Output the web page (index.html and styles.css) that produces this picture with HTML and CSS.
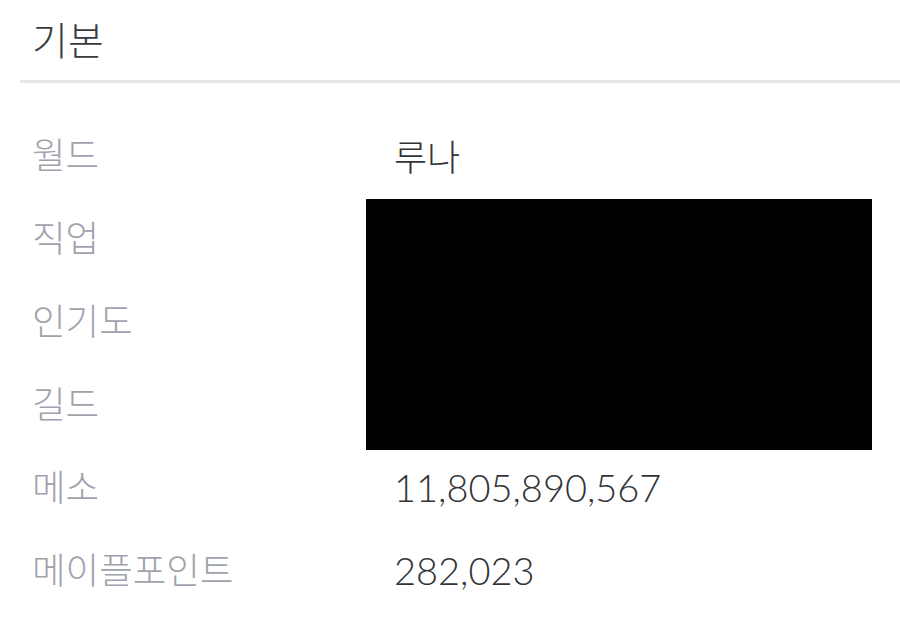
FILE: index.html
```html
<!DOCTYPE html>
<html lang="ko">
<head>
<meta charset="utf-8">
<link rel="stylesheet" href="styles.css">
</head>
<body>
<section class="panel">
  <header class="head"><h2 class="title">기본</h2></header>
  <dl class="info">
    <dt class="label">월드</dt><dd class="value">루나</dd>
    <dt class="label">직업</dt>
    <dd class="redact" aria-hidden="true"></dd>
    <dt class="label">인기도</dt>
    <dt class="label">길드</dt>
    <dt class="label">메소</dt><dd class="value num">11,805,890,567</dd>
    <dt class="label">메이플포인트</dt><dd class="value num">282,023</dd>
  </dl>
</section>
</body>
</html>
```
FILE: styles.css
```css
html, body { margin: 0; padding: 0; background: #fff; }
body { font-family: "Noto Sans CJK KR", "Noto Sans", sans-serif; font-weight: 300; }
.panel { padding-left: 20px; }
.head { border-bottom: 3px solid #e6e6e8; height: 80px; display: flex; align-items: center; }
.title { margin: 0 0 4px 12px; font-size: 39px; font-weight: 300; color: #3a3b40; line-height: 1; }
.info {
  margin: 30px 0 0 0;
  display: grid;
  grid-template-columns: 374px 1fr;
  grid-auto-rows: 83px;
  align-items: center;
}
.label { grid-column: 1; margin: 0 0 0 12px; font-size: 36.5px; color: #a0a3ad; line-height: 1; }
.value { grid-column: 2; margin: 0; font-size: 36px; color: #333438; line-height: 1; }
.num { font-family: "Lato", "Noto Sans", sans-serif; font-weight: 300; font-size: 38px; letter-spacing: 0; }
.redact { grid-column: 2; grid-row: 2 / 5; margin: 3px 28px 0 -28px; align-self: stretch; background: #000; height: 251px; }
```
